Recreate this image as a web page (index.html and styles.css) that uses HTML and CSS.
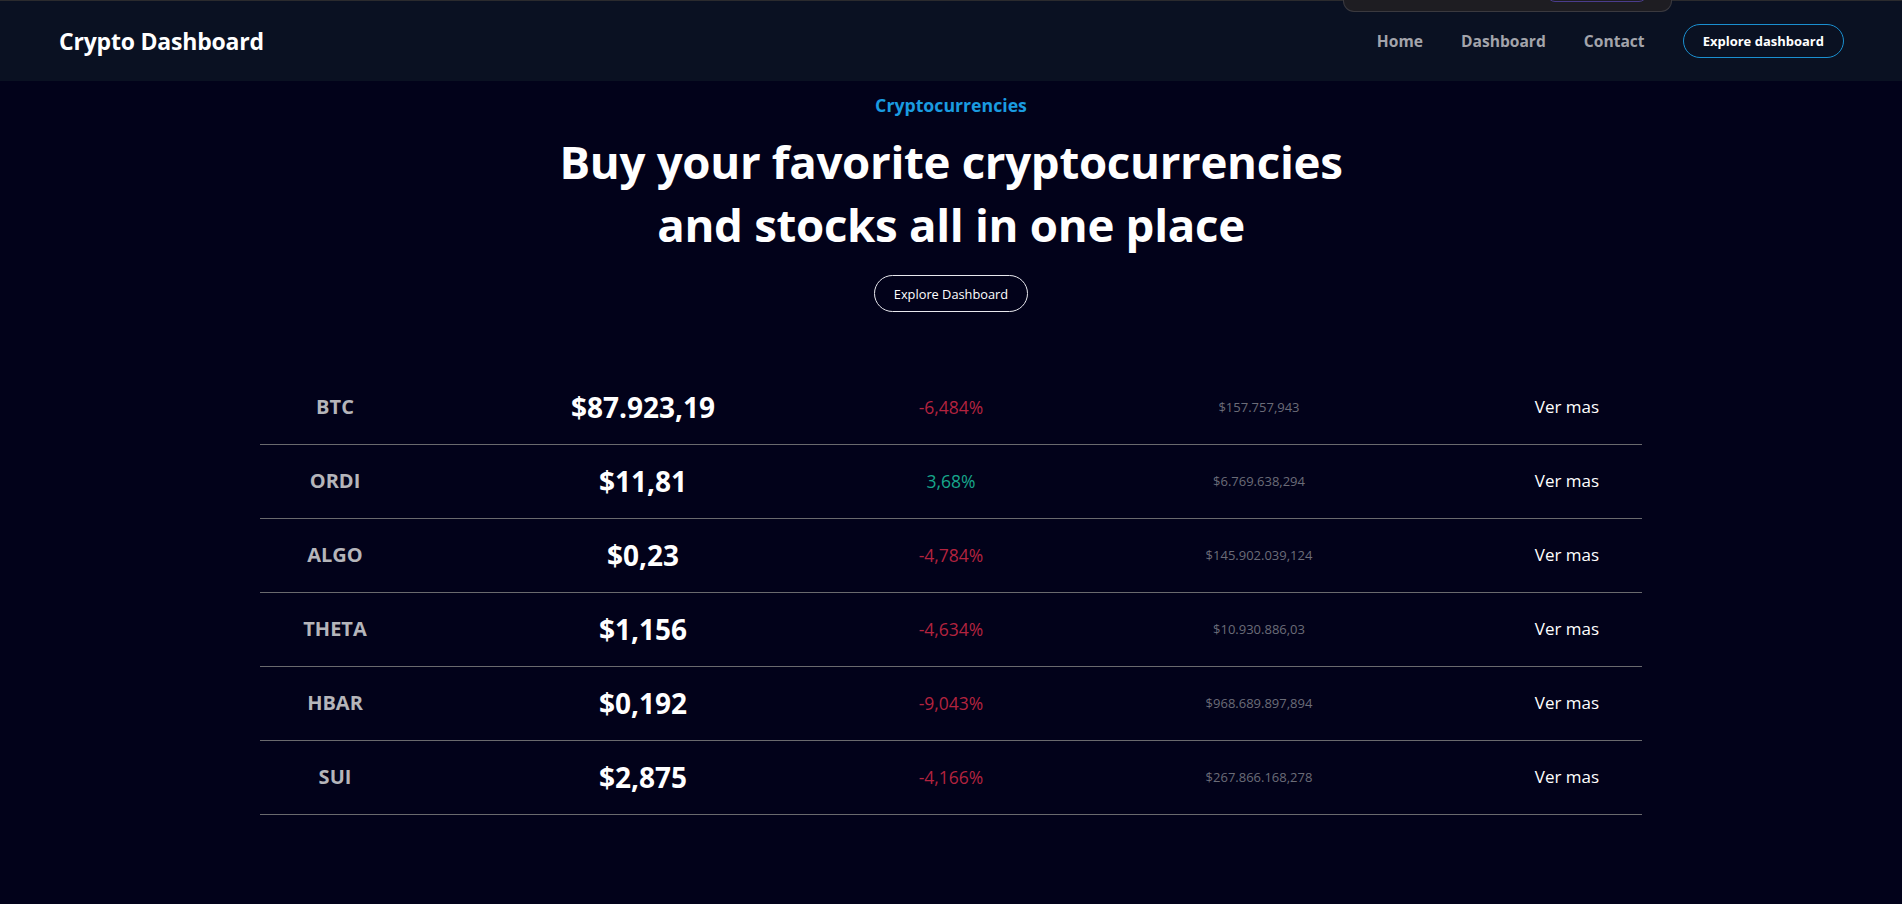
FILE: index.html
```html
<!DOCTYPE html>
<html lang="en">
<head>
<meta charset="utf-8">
<title>Crypto Dashboard</title>
<link rel="stylesheet" href="styles.css">
</head>
<body>
  <header class="navbar">
    <div class="logo">Crypto Dashboard</div>
    <nav class="nav">
      <a class="nav-link" href="#">Home</a>
      <a class="nav-link" href="#">Dashboard</a>
      <a class="nav-link" href="#">Contact</a>
      <a class="nav-btn" href="#">Explore dashboard</a>
    </nav>
    <div class="overlay-pill"><span class="overlay-inner"></span></div>
  </header>

  <main>
    <section class="hero">
      <p class="eyebrow">Cryptocurrencies</p>
      <h1 class="title">Buy your favorite cryptocurrencies<br>and stocks all in one place</h1>
      <a class="hero-btn" href="#">Explore Dashboard</a>
    </section>

    <section class="table">
      <div class="row"><div class="cells">
        <span class="sym">BTC</span><span class="price">$87.923,19</span><span class="chg down">-6,484%</span><span class="cap">$157.757,943</span><a class="more" href="#">Ver mas</a>
      </div></div>
      <div class="row"><div class="cells">
        <span class="sym">ORDI</span><span class="price">$11,81</span><span class="chg up">3,68%</span><span class="cap">$6.769.638,294</span><a class="more" href="#">Ver mas</a>
      </div></div>
      <div class="row"><div class="cells">
        <span class="sym">ALGO</span><span class="price">$0,23</span><span class="chg down">-4,784%</span><span class="cap">$145.902.039,124</span><a class="more" href="#">Ver mas</a>
      </div></div>
      <div class="row"><div class="cells">
        <span class="sym">THETA</span><span class="price">$1,156</span><span class="chg down">-4,634%</span><span class="cap">$10.930.886,03</span><a class="more" href="#">Ver mas</a>
      </div></div>
      <div class="row"><div class="cells">
        <span class="sym">HBAR</span><span class="price">$0,192</span><span class="chg down">-9,043%</span><span class="cap">$968.689.897,894</span><a class="more" href="#">Ver mas</a>
      </div></div>
      <div class="row"><div class="cells">
        <span class="sym">SUI</span><span class="price">$2,875</span><span class="chg down">-4,166%</span><span class="cap">$267.866.168,278</span><a class="more" href="#">Ver mas</a>
      </div></div>
    </section>
  </main>
</body>
</html>
```
FILE: styles.css
```css
* { box-sizing: border-box; }

html, body {
  margin: 0;
  padding: 0;
}

body {
  background: #02021a;
  color: #ffffff;
  font-family: "Open Sans", "Noto Sans", sans-serif;
  min-height: 904px;
}

a { text-decoration: none; color: inherit; }

.navbar {
  position: relative;
  height: 81px;
  border-top: 1px solid #2b2b2e;
  background: #0a1122;
  display: flex;
  align-items: center;
  justify-content: space-between;
  padding: 0 58px 0 59px;
}

.logo {
  font-size: 23px;
  font-weight: 700;
  color: #ffffff;
  letter-spacing: -0.2px;
}

.nav {
  display: flex;
  align-items: center;
  gap: 38px;
}

.nav-link {
  font-size: 15.6px;
  font-weight: 700;
  color: #a3a4ab;
}

.nav-btn {
  height: 34px;
  display: flex;
  align-items: center;
  padding: 0 19px;
  border: 1px solid #1a8fd0;
  border-radius: 17px;
  font-size: 13px;
  font-weight: 700;
  color: #ffffff;
}

.overlay-pill {
  position: absolute;
  top: -1px;
  left: 1343px;
  width: 329px;
  height: 12px;
  background: #1e1d22;
  border: 1px solid #3a393f;
  border-top: none;
  border-radius: 0 0 11px 11px;
}

.overlay-inner {
  position: absolute;
  left: 203px;
  top: -8px;
  width: 100px;
  height: 10px;
  border: 1px solid #4a3c8c;
  border-radius: 0 0 8px 8px;
}

.hero {
  display: flex;
  flex-direction: column;
  align-items: center;
  padding-top: 12px;
}

.eyebrow {
  margin: 0;
  font-size: 17.7px;
  line-height: 24px;
  font-weight: 700;
  color: #1a9be0;
}

.title {
  margin: 13px 0 0;
  font-size: 45.6px;
  line-height: 63px;
  font-weight: 700;
  text-align: center;
  color: #ffffff;
  letter-spacing: -0.3px;
}

.hero-btn {
  margin-top: 19px;
  height: 37px;
  display: flex;
  align-items: center;
  padding: 0 19px;
  border: 1px solid #e8e8ee;
  border-radius: 19px;
  font-size: 12.8px;
  color: #ffffff;
}

.table {
  width: 1382px;
  margin: 59px auto 0;
}

.row {
  height: 74px;
  border-bottom: 1px solid #6a6a6e;
}

.cells {
  margin: 0 -79px;
  height: 73px;
  padding-bottom: 2px;
  display: grid;
  grid-template-columns: repeat(5, 1fr);
  align-items: center;
  justify-items: center;
}

.sym {
  font-size: 20px;
  font-weight: 700;
  color: #b5b5ba;
}

.price {
  font-size: 28px;
  font-weight: 700;
  color: #ffffff;
}

.chg {
  font-size: 17.5px;
}

.down { color: #b3233f; }
.up { color: #17a68b; }

.cap {
  font-size: 13px;
  color: #6b6c78;
}

.more {
  font-size: 17px;
  color: #ffffff;
}
```
